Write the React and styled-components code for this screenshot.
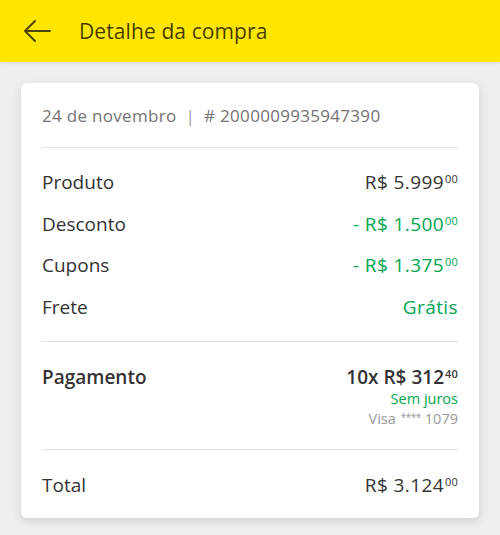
import React from 'react';
import styled, { createGlobalStyle } from 'styled-components';

const GlobalStyle = createGlobalStyle`
  body {
    margin: 0;
    background: #eeeeee;
    font-family: "Open Sans", "Liberation Sans", sans-serif;
  }
`;

const Page = styled.div`
  width: 500px;
  height: 535px;
  background: #eeeeee;
  overflow: hidden;
`;

const TopBar = styled.header`
  height: 62px;
  background: #ffe600;
  display: flex;
  align-items: center;
  padding-left: 22px;
  box-sizing: border-box;
  box-shadow: 0 1px 3px rgba(0, 0, 0, 0.08);
`;

const BackButton = styled.button`
  border: none;
  background: none;
  padding: 0;
  width: 30px;
  height: 30px;
  display: flex;
  align-items: center;
  justify-content: center;
  margin-right: 27px;
`;

const Title = styled.h1`
  margin: 0;
  font-size: 21px;
  font-weight: 400;
  color: rgba(0, 0, 0, 0.75);
  letter-spacing: 0.1px;
`;

const Card = styled.section`
  margin: 21px 21px 0;
  background: #fff;
  border-radius: 6px;
  box-shadow: 0 3px 10px rgba(0, 0, 0, 0.12);
  padding: 0 21px;
`;

const Meta = styled.div`
  height: 64px;
  display: flex;
  align-items: center;
  font-size: 17px;
  letter-spacing: 0.3px;
  color: #737373;
  border-bottom: 1px solid #e3e3e3;
`;

const Sep = styled.span`
  margin: 0 9px;
  color: #999;
`;

const Section = styled.div`
  padding: ${p => p.$pad || '16px 0'};
  border-bottom: ${p => (p.$last ? 'none' : '1px solid #e3e3e3')};
  display: flex;
  flex-direction: column;
  gap: ${p => p.$gap || '0'};
`;

const Row = styled.div`
  display: flex;
  justify-content: space-between;
  align-items: flex-start;
  font-size: 19px;
  line-height: 24px;
  color: #333;
`;

const Label = styled.span`
  font-weight: ${p => (p.$bold ? 600 : 400)};
`;

const Value = styled.div`
  display: flex;
  flex-direction: column;
  align-items: flex-end;
`;

const Amount = styled.span`
  color: ${p => (p.$green ? '#00a650' : '#333')};
  font-weight: ${p => (p.$bold ? 600 : 400)};
  letter-spacing: ${p => (p.$bold ? '0' : '0.4px')};
`;

const Cents = styled.sup`
  font-size: 11px;
  vertical-align: top;
  position: relative;
  top: -3px;
  margin-left: 1px;
  letter-spacing: 0.2px;
`;

const Note = styled.span`
  font-size: 14.5px;
  line-height: 20px;
  color: ${p => (p.$green ? '#00a650' : '#999')};
`;

const Mask = styled.span`
  font-size: 10px;
  line-height: 0;
  vertical-align: 3px;
  letter-spacing: -0.5px;
  margin: 0 4px 0 5px;
`;

const Price = ({ prefix = '', whole, cents, green, bold }) => (
  <Amount $green={green} $bold={bold}>
    {prefix}R$ {whole}
    <Cents>{cents}</Cents>
  </Amount>
);

export default function App() {
  return (
    <Page>
      <GlobalStyle />
      <TopBar>
        <BackButton aria-label="Voltar">
          <svg width="28" height="24" viewBox="0 0 28 24" fill="none" stroke="rgba(0,0,0,0.7)" strokeWidth="2" strokeLinecap="round" strokeLinejoin="round">
            <path d="M27 12H2M12 2L2 12l10 10" />
          </svg>
        </BackButton>
        <Title>Detalhe da compra</Title>
      </TopBar>
      <Card>
        <Meta>
          24 de novembro<Sep>|</Sep># 2000009935947390
        </Meta>
        <Section $pad="22px 0 22px" $gap="17.5px">
          <Row>
            <Label>Produto</Label>
            <Price whole="5.999" cents="00" />
          </Row>
          <Row>
            <Label>Desconto</Label>
            <Price prefix="- " whole="1.500" cents="00" green />
          </Row>
          <Row>
            <Label>Cupons</Label>
            <Price prefix="- " whole="1.375" cents="00" green />
          </Row>
          <Row>
            <Label>Frete</Label>
            <Amount $green>Grátis</Amount>
          </Row>
        </Section>
        <Section $pad="23px 0 20px">
          <Row>
            <Label $bold>Pagamento</Label>
            <Value>
              <Price whole="312" cents="40" bold prefix="10x " />
              <Note $green>Sem juros</Note>
              <Note>Visa<Mask>****</Mask>1079</Note>
            </Value>
          </Row>
        </Section>
        <Section $pad="23px 0 21px" $last>
          <Row>
            <Label>Total</Label>
            <Price whole="3.124" cents="00" />
          </Row>
        </Section>
      </Card>
    </Page>
  );
}
